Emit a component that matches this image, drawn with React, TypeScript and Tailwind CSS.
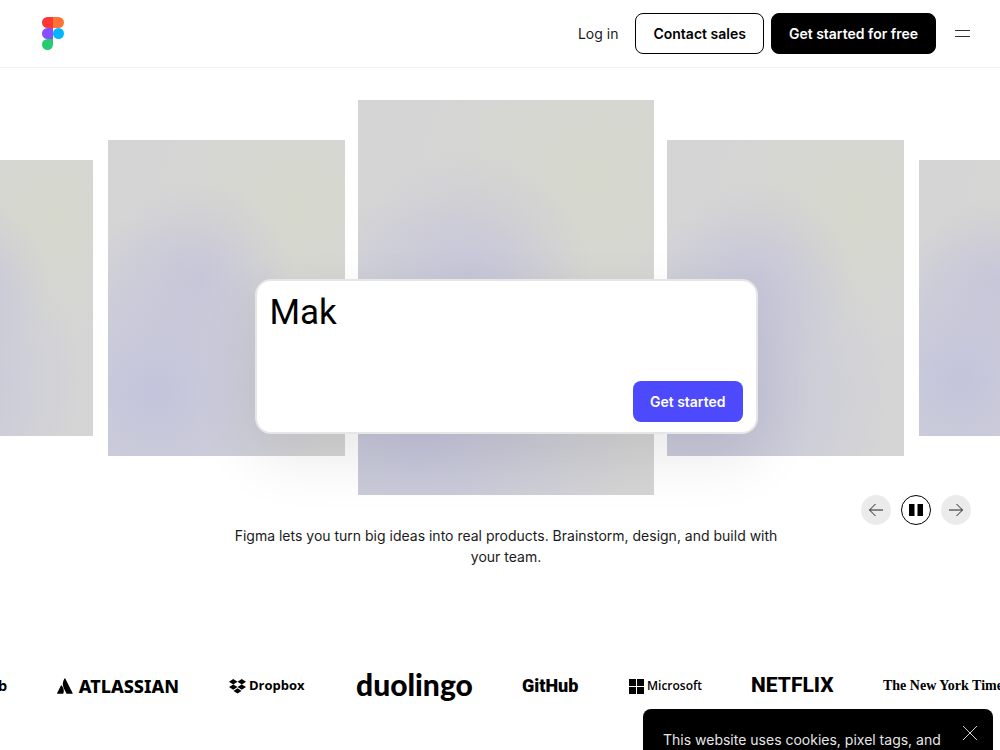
import React, { useState } from "react";
import { SiAtlassian } from "react-icons/si";

const cards = [
  "w-[207px] h-[276px]",
  "w-[237px] h-[316px] mr-[-2px]",
  "w-[296px] h-[395px]",
  "w-[237px] h-[316px] ml-[-2px]",
  "w-[207px] h-[276px]",
];

const FigmaLogo: React.FC = () => (
  <svg width="22" height="33" viewBox="0 0 22 33" aria-hidden="true">
    <path d="M5.5 0H11v11H5.5a5.5 5.5 0 0 1 0-11Z" fill="#ff3737" />
    <path d="M11 0h5.5a5.5 5.5 0 0 1 0 11H11Z" fill="#ff7237" />
    <path d="M5.5 11H11v11H5.5a5.5 5.5 0 0 1 0-11Z" fill="#874fff" />
    <circle cx="16.5" cy="16.5" r="5.5" fill="#00b6ff" />
    <path d="M5.5 22H11v5.5A5.5 5.5 0 1 1 5.5 22Z" fill="#24cb71" />
  </svg>
);

const Header: React.FC = () => (
  <header className="flex h-17 items-center justify-between border-b border-[#f0f0f0] pr-[29px] pl-[42px]">
    <a href="#home" aria-label="Figma home">
      <FigmaLogo />
    </a>
    <nav className="flex items-center">
      <a href="#login" className="mr-[17px] text-sm leading-[21px]">
        Log in
      </a>
      <button className="mr-[7px] rounded-lg border border-black px-[17px] py-[9px] text-sm leading-[21px] font-semibold text-black">
        Contact sales
      </button>
      <button className="mr-[18px] rounded-lg border border-black bg-black px-[17px] py-[9px] text-sm leading-[21px] font-semibold text-white">
        Get started for free
      </button>
      <button aria-label="Open menu">
        <svg width="17" height="9" viewBox="0 0 17 9" stroke="#333" fill="none">
          <path d="M1 1.5h15M1 7.5h15" />
        </svg>
      </button>
    </nav>
  </header>
);

const Carousel: React.FC = () => {
  const [prompt, setPrompt] = useState("Mak");

  return (
    <div className="relative flex items-center justify-center gap-[15px] overflow-hidden pt-8 pb-12 pl-3">
      {cards.map((size, i) => (
        <div
          key={i}
          className={`${size} shrink-0 bg-[#d5d5d5] bg-[radial-gradient(circle_at_20%_80%,#c3c4dc_0%,#c3c4dc00_56%),radial-gradient(circle_at_38%_44%,#c9c7d8_0%,#c9c7d800_42%),radial-gradient(circle_at_80%_20%,#d6d8cd_0%,#d6d8cd00_45%)]`}
        />
      ))}
      <div className="absolute inset-x-0 top-[211px] flex justify-center pl-3">
        <form
          className="flex h-[155px] w-[503px] flex-col rounded-2xl border-2 border-[#e6e6e6] bg-white p-[13px] pt-2 pb-[10px] shadow-[0_24px_60px_rgba(0,0,0,0.09)]"
          onSubmit={(e) => e.preventDefault()}
        >
          <textarea
            aria-label="Prompt"
            className="flex-1 resize-none overflow-hidden font-['Roboto'] text-[35px] leading-[48px] text-black outline-none"
            value={prompt}
            onChange={(e) => setPrompt(e.target.value)}
          />
          <button className="self-end rounded-lg bg-[#4d49fc] px-[17px] py-[10px] text-sm leading-[21px] font-semibold text-white">
            Get started
          </button>
        </form>
      </div>
    </div>
  );
};

const Controls: React.FC = () => {
  const [playing, setPlaying] = useState(true);

  return (
    <div className="relative -mt-12 flex justify-end gap-[10px] pr-[29px]">
      <button aria-label="Previous" className="flex size-[30px] items-center justify-center rounded-full bg-[#ebebeb]">
        <svg width="16" height="14" viewBox="0 0 16 14" fill="none" stroke="#222">
          <path d="M15 7H1.5M7.5 1l-6 6 6 6" />
        </svg>
      </button>
      <button
        aria-label={playing ? "Pause" : "Play"}
        onClick={() => setPlaying(!playing)}
        className="flex size-[30px] items-center justify-center rounded-full border border-black bg-white"
      >
        <svg width="14" height="12" viewBox="0 0 14 12">
          {playing ? <path d="M0 0h5.5v12H0zM8.5 0H14v12H8.5z" /> : <path d="M2 0l11 6-11 6z" />}
        </svg>
      </button>
      <button aria-label="Next" className="flex size-[30px] items-center justify-center rounded-full bg-[#ebebeb]">
        <svg width="16" height="14" viewBox="0 0 16 14" fill="none" stroke="#222">
          <path d="M1 7h13.5M8.5 1l6 6-6 6" />
        </svg>
      </button>
    </div>
  );
};

const Logos: React.FC = () => (
  <div className="flex h-10 items-center gap-[50px] overflow-hidden whitespace-nowrap text-black">
    <span className="flex w-[7px] shrink-0 justify-end text-sm font-bold">airbnb</span>
    <span className="flex w-[122px] shrink-0 items-center gap-[6px] font-['Noto_Sans'] text-lg font-extrabold">
      <SiAtlassian size={16} />
      ATLASSIAN
    </span>
    <span className="flex w-[77px] shrink-0 items-center gap-[3px] font-['Open_Sans'] text-[13px] font-bold">
      <svg className="shrink-0" width="17" height="15" viewBox="0 0 17 15" aria-hidden="true">
        <path d="M4.25 0 8.5 2.7 4.25 5.4 0 2.7zM12.75 0 17 2.7 12.75 5.4 8.5 2.7zM4.25 5.4 8.5 8.1 4.25 10.8 0 8.1zM12.75 5.4 17 8.1 12.75 10.8 8.5 8.1zM8.5 9.2 12.5 11.9 8.5 14.6 4.5 11.9z" />
      </svg>
      Dropbox
    </span>
    <span className="w-[116px] shrink-0 pb-1 font-['Lato',sans-serif] text-[30px] leading-8 font-black">duolingo</span>
    <span className="w-[57px] shrink-0 font-['Roboto'] text-lg font-black">GitHub</span>
    <span className="flex w-[72px] shrink-0 items-center gap-[3px] font-['Open_Sans'] text-xs font-semibold">
      <svg className="shrink-0" width="15" height="15" viewBox="0 0 15 15" aria-hidden="true">
        <path d="M0 0h7v7H0zM8 0h7v7H8zM0 8h7v7H0zM8 8h7v7H8z" />
      </svg>
      Microsoft
    </span>
    <span className="w-[82px] shrink-0 font-['Roboto'] text-[21px] font-extrabold">NETFLIX</span>
    <span className="shrink-0 font-['Liberation_Serif'] text-sm font-bold">The New York Times</span>
  </div>
);

const CookieBanner: React.FC = () => (
  <aside className="fixed right-[7px] bottom-0 flex w-[350px] max-w-full items-start justify-between rounded-t-lg bg-black pt-5 pr-[15px] pl-5 text-white">
    <p className="text-sm leading-[21px] whitespace-nowrap text-[#e6e6e6]">This website uses cookies, pixel tags, and</p>
    <button aria-label="Close" className="-mt-1">
      <svg width="16" height="16" viewBox="0 0 16 16" stroke="#d0d0d0" fill="none">
        <path d="M1 1l14 14M15 1L1 15" />
      </svg>
    </button>
  </aside>
);

export default function App() {
  return (
    <div className="overflow-hidden bg-white font-['Inter',sans-serif] text-[#1a1a1a]">
      <Header />
      <main>
        <Carousel />
        <Controls />
        <p className="mx-auto max-w-[572px] pl-3 text-center text-sm leading-[21px]">
          Figma lets you turn big ideas into real products. Brainstorm, design, and build with your team.
        </p>
        <div className="mt-[99px]">
          <Logos />
        </div>
      </main>
      <CookieBanner />
    </div>
  );
}
